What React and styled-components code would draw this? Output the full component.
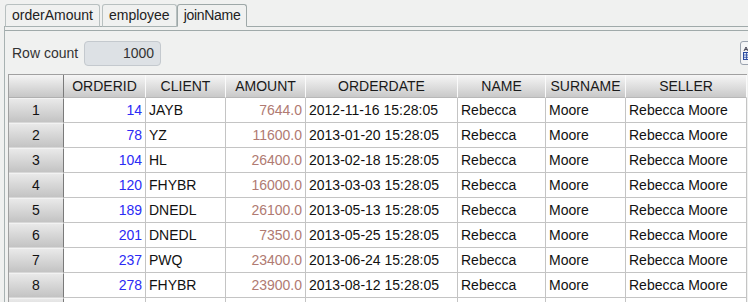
import React from "react";
import styled, { createGlobalStyle } from "styled-components";

const rows = [
  [1, 14, "JAYB", "7644.0", "2012-11-16 15:28:05"],
  [2, 78, "YZ", "11600.0", "2013-01-20 15:28:05"],
  [3, 104, "HL", "26400.0", "2013-02-18 15:28:05"],
  [4, 120, "FHYBR", "16000.0", "2013-03-03 15:28:05"],
  [5, 189, "DNEDL", "26100.0", "2013-05-13 15:28:05"],
  [6, 201, "DNEDL", "7350.0", "2013-05-25 15:28:05"],
  [7, 237, "PWQ", "23400.0", "2013-06-24 15:28:05"],
  [8, 278, "FHYBR", "23900.0", "2013-08-12 15:28:05"],
];

const columns = ["ORDERID", "CLIENT", "AMOUNT", "ORDERDATE", "NAME", "SURNAME", "SELLER"];

const GlobalStyle = createGlobalStyle`
  body {
    margin: 0;
    background: #f0f1f0;
    font-family: "Liberation Sans", Arial, sans-serif;
  }
`;

const App = () => {
  return (
    <Wrapper>
      <GlobalStyle />
      <TabStrip>
        <Tab>orderAmount</Tab>
        <Tab>employee</Tab>
        <Tab active>joinName</Tab>
      </TabStrip>
      <Panel>
        <Inner>
          <Toolbar>
            <Label>Row count</Label>
            <CountBox>1000</CountBox>
            <Spacer />
            <IconButton>
              <svg width="12" height="14" viewBox="0 0 12 14">
                <path d="M1 5 L3 1 L5 5 M1.8 3.6 H4.2" stroke="#334" strokeWidth="0.9" fill="none" />
                <rect x="0.5" y="6.5" width="9" height="7" fill="#dfe8f8" stroke="#2a4aa0" />
                <path d="M0.5 9 H9.5 M0.5 11.3 H9.5 M3.5 6.5 V13.5 M6.5 6.5 V13.5" stroke="#2a4aa0" strokeWidth="0.8" />
              </svg>
            </IconButton>
          </Toolbar>
          <Grid>
            <Corner />
            {columns.map((c) => (
              <HeadCell key={c}>{c}</HeadCell>
            ))}
            {rows.map(([n, id, client, amount, date]) => (
              <React.Fragment key={n}>
                <RowHead>{n}</RowHead>
                <Cell align="right" color="#2b2bf5">{id}</Cell>
                <Cell>{client}</Cell>
                <Cell align="right" color="#b07a72">{amount}</Cell>
                <Cell>{date}</Cell>
                <Cell>Rebecca</Cell>
                <Cell>Moore</Cell>
                <Cell>Rebecca Moore</Cell>
              </React.Fragment>
            ))}
            {/* next row, only its top edge shows */}
            <RowHead />
            {columns.map((c) => (
              <Cell key={c} />
            ))}
          </Grid>
        </Inner>
      </Panel>
    </Wrapper>
  );
};

const Wrapper = styled.div`
  width: 748px;
  height: 302px;
  overflow: hidden;
  background: #f0f1f0;
  font-size: 14px;
  color: #111;
`;

const TabStrip = styled.div`
  display: flex;
  gap: 2px;
  padding: 4px 0 0 5px;
  position: relative;
  z-index: 1;
`;

const Tab = styled.div`
  box-sizing: border-box;
  height: 23px;
  padding: 2px 6px 0 6px;
  margin-bottom: -1px;
  border: 1px solid ${({ active }) => (active ? "#9ea8a8" : "#b8c0c0")};
  border-bottom: 1px solid ${({ active }) => (active ? "#f0f1f0" : "#a8b2b2")};
  border-radius: 3px 3px 0 0;
  background: #f0f1f0;
  color: #222;
  line-height: 17px;
  letter-spacing: ${({ active }) => (active ? "-0.3px" : "0")};
  margin-left: ${({ active }) => (active ? "-2px" : "0")};
`;

const Panel = styled.div`
  margin-left: 4px;
  border-left: 1px solid #a8b2b2;
  border-top: 1px solid #a0aaaa;
  height: 400px;
`;

const Inner = styled.div`
  margin-top: 3px;
  border-top: 1px solid #a0aaaa;
`;

const Toolbar = styled.div`
  display: flex;
  align-items: center;
  padding: 9px 0 0 7px;
  height: 26px;
`;

const Label = styled.span`
  color: #333;
  margin-right: 6px;
`;

const CountBox = styled.div`
  box-sizing: border-box;
  width: 77px;
  height: 25px;
  padding: 0 6px;
  border: 1px solid #c4c9ce;
  border-radius: 4px;
  background: #dde1e5;
  color: #333;
  text-align: right;
  line-height: 23px;
`;

const Spacer = styled.div`
  flex: 1;
`;

const IconButton = styled.div`
  box-sizing: border-box;
  width: 24px;
  height: 24px;
  margin-right: -16px;
  border: 1px solid #9aa2ae;
  border-radius: 3px;
  background: #f4f5f6;
  display: flex;
  align-items: center;
  padding-left: 2px;
`;

const Grid = styled.div`
  display: grid;
  grid-template-columns: 55px 82px 80px 80px 152px 88px 80px 121px;
  grid-auto-rows: 25px;
  grid-template-rows: 23px;
  margin: 8px 0 0 3px;
  border-left: 1px solid #a0a0a0;
  border-top: 1px solid #a0a0a0;
  width: max-content;
  background: #fff;
`;

const Corner = styled.div`
  box-sizing: border-box;
  border-right: 1px solid #7a7a7a;
  border-bottom: 1px solid #b0b0b0;
  background: linear-gradient(#f4f4f4, #c6c6c6);
`;

const HeadCell = styled.div`
  box-sizing: border-box;
  border-right: 1px solid #fafafa;
  border-bottom: 1px solid #b8b8b8;
  background: linear-gradient(#f6f6f6, #c9c9c9);
  color: #1a1a1a;
  text-align: center;
  line-height: 22px;
`;

const RowHead = styled.div`
  box-sizing: border-box;
  border-right: 1px solid #7a7a7a;
  border-top: 1px solid #f2f2f2;
  border-bottom: 1px solid #d8d8d8;
  background: linear-gradient(#e9e9e9, #c3c3c3);
  text-align: center;
  line-height: 23px;
  color: #111;
`;

const Cell = styled.div`
  box-sizing: border-box;
  border-right: 1px solid #c4c4c4;
  border-bottom: 1px solid #c4c4c4;
  padding: 0 3px;
  line-height: 24px;
  white-space: nowrap;
  overflow: hidden;
  text-align: ${({ align }) => align || "left"};
  color: ${({ color }) => color || "#111"};
`;

export default App;
